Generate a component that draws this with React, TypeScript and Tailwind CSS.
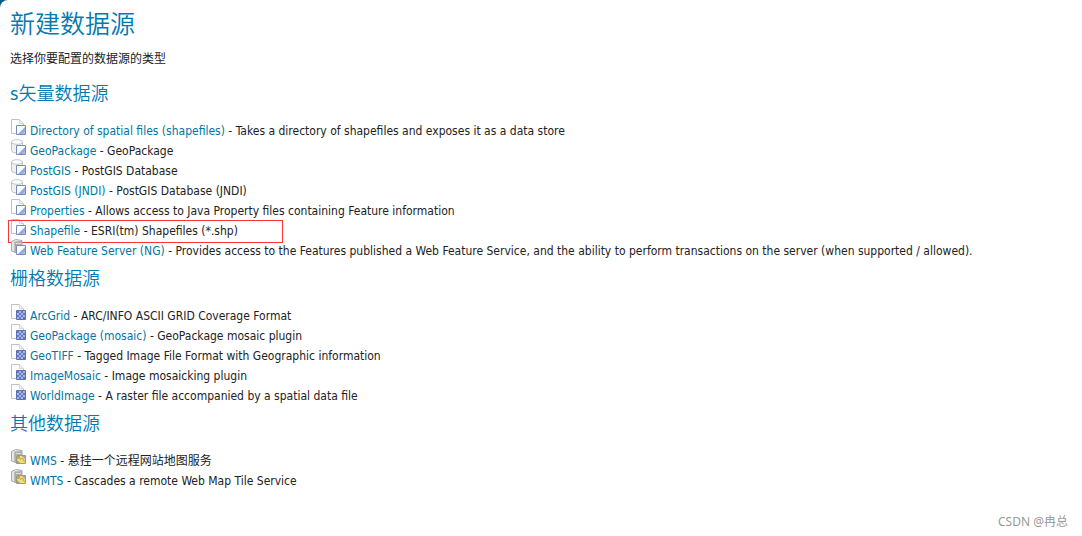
import React from 'react';

type Base = 'file' | 'database' | 'server';
type Badge = 'vector' | 'grid' | 'map';

interface Store {
  name: string;
  description: string;
  base: Base;
  badge: Badge;
}

interface Group {
  title: string;
  stores: Store[];
}

const groups: Group[] = [
  {
    title: 's矢量数据源',
    stores: [
      { name: 'Directory of spatial files (shapefiles)', description: 'Takes a directory of shapefiles and exposes it as a data store', base: 'file', badge: 'vector' },
      { name: 'GeoPackage', description: 'GeoPackage', base: 'database', badge: 'vector' },
      { name: 'PostGIS', description: 'PostGIS Database', base: 'database', badge: 'vector' },
      { name: 'PostGIS (JNDI)', description: 'PostGIS Database (JNDI)', base: 'database', badge: 'vector' },
      { name: 'Properties', description: 'Allows access to Java Property files containing Feature information', base: 'file', badge: 'vector' },
      { name: 'Shapefile', description: 'ESRI(tm) Shapefiles (*.shp)', base: 'file', badge: 'vector' },
      { name: 'Web Feature Server (NG)', description: 'Provides access to the Features published a Web Feature Service, and the ability to perform transactions on the server (when supported / allowed).', base: 'server', badge: 'vector' },
    ],
  },
  {
    title: '栅格数据源',
    stores: [
      { name: 'ArcGrid', description: 'ARC/INFO ASCII GRID Coverage Format', base: 'file', badge: 'grid' },
      { name: 'GeoPackage (mosaic)', description: 'GeoPackage mosaic plugin', base: 'file', badge: 'grid' },
      { name: 'GeoTIFF', description: 'Tagged Image File Format with Geographic information', base: 'file', badge: 'grid' },
      { name: 'ImageMosaic', description: 'Image mosaicking plugin', base: 'file', badge: 'grid' },
      { name: 'WorldImage', description: 'A raster file accompanied by a spatial data file', base: 'file', badge: 'grid' },
    ],
  },
  {
    title: '其他数据源',
    stores: [
      { name: 'WMS', description: '悬挂一个远程网站地图服务', base: 'server', badge: 'map' },
      { name: 'WMTS', description: 'Cascades a remote Web Map Tile Service', base: 'server', badge: 'map' },
    ],
  },
];

function StoreIcon({ base, badge }: { base: Base; badge: Badge }) {
  return (
    <svg className="size-4 shrink-0" viewBox="0 0 16 16" aria-hidden="true">
      {base === 'file' && (
        <>
          <path d="M1.5 .5h8l4 4v10h-12z" fill="#fdfdfd" stroke="#c2c2c2" />
          <path d="M9.500 .5v4h4z" fill="#f1f1f1" stroke="#d6d6d6" />
        </>
      )}
      {base === 'database' && (
        <>
          <path d="M1.500 3v8.500c0 1.500 2.500 2.500 5.500 2.500s5.500-1 5.500-2.500V3z" fill="#f0f0f0" stroke="#c0c0c0" />
          <ellipse cx="7" cy="3" rx="5.500" ry="2.300" fill="#fff" stroke="#c6c6c6" />
        </>
      )}
      {base === 'server' && (
        <>
          <path d="M1.500 2.500l4-2 6.500 1v11l-5 1.500-5.500-2z" fill="#e6e6e6" stroke="#a8a8a8" />
          <path d="M5 2.500l7-.5v11l-7 1z" fill="#adadad" />
          <path d="M6 4.500h5M6 6.500h5M6 8.500h3" stroke="#dcdcdc" />
          <path d="M4.500 2.500v11" stroke="#bdbdbd" />
        </>
      )}
      {badge === 'vector' && (
        <>
          <path d="M6.500 6.500h9v9h-9z" fill="#fff" stroke="#7389c6" />
          <path d="M15 8v7H8z" fill="#93a9e0" />
          <path d="M15 12v3h-3z" fill="#b0c0ec" />
        </>
      )}
      {badge === 'grid' && (
        <>
          <path d="M6.500 6.500h9v9h-9z" fill="#a6b7e6" stroke="#5a70b2" />
          <path d="M7 7h2v2H7zM11 7h2v2h-2zM9 9h2v2H9zM13 9h2v2h-2zM7 11h2v2H7zM11 11h2v2h-2zM9 13h2v2H9zM13 13h2v2h-2z" fill="#6178c2" />
        </>
      )}
      {badge === 'map' && (
        <>
          <path d="M6.500 6.500h9v8h-9z" fill="#f2e06b" stroke="#a39a78" />
          <path d="M7 7h3l-1 3H7z" fill="#8fbd78" />
          <path d="M12 7h3v3z" fill="#8fabcf" />
          <path d="M7 14v-3l3 3z" fill="#7f9dca" />
          <path d="M8.500 7l2 3.500 2-1.500 2 4" fill="none" stroke="#e07850" strokeWidth=".8" />
        </>
      )}
    </svg>
  );
}

export default function App() {
  return (
    <div className="bg-[#005c80]">
      <main className="flex min-h-screen flex-col rounded-tl-lg bg-white px-2.5 font-['DejaVu_Sans_Condensed','Noto_Sans_CJK_SC',sans-serif] text-xs text-[#222]">
        <h1 className="pt-[7px] text-[25px] leading-9 font-[350] text-[#007ab0]">新建数据源</h1>
        <p className="pt-[7px] leading-[18px]">选择你要配置的数据源的类型</p>
        <div className="grow pt-1.5">
          {groups.map((group) => (
            <section key={group.title}>
              <h2 className="pt-0.5 pb-[7px] text-lg leading-9 font-[350] text-[#007ab0]">{group.title}</h2>
              <ul>
                {group.stores.map((store) => (
                  <li key={store.name} className="relative flex h-5 items-start gap-1 leading-5">
                    <StoreIcon base={store.base} badge={store.badge} />
                    <span className="pt-0.5 whitespace-nowrap">
                      <a href="#" className="text-[#0076a1]">{store.name}</a>
                      {' - '}
                      {store.description}
                    </span>
                    {store.name === 'Shapefile' && (
                      <span className="pointer-events-none absolute top-px -left-0.5 h-[23px] w-[275px] border border-[#f33]" />
                    )}
                  </li>
                ))}
              </ul>
            </section>
          ))}
        </div>
        <footer className="pr-1 pb-1.5 text-right font-['Noto_Sans','Noto_Sans_CJK_SC',sans-serif] leading-4 text-[#999]">CSDN @冉总</footer>
      </main>
    </div>
  );
}
